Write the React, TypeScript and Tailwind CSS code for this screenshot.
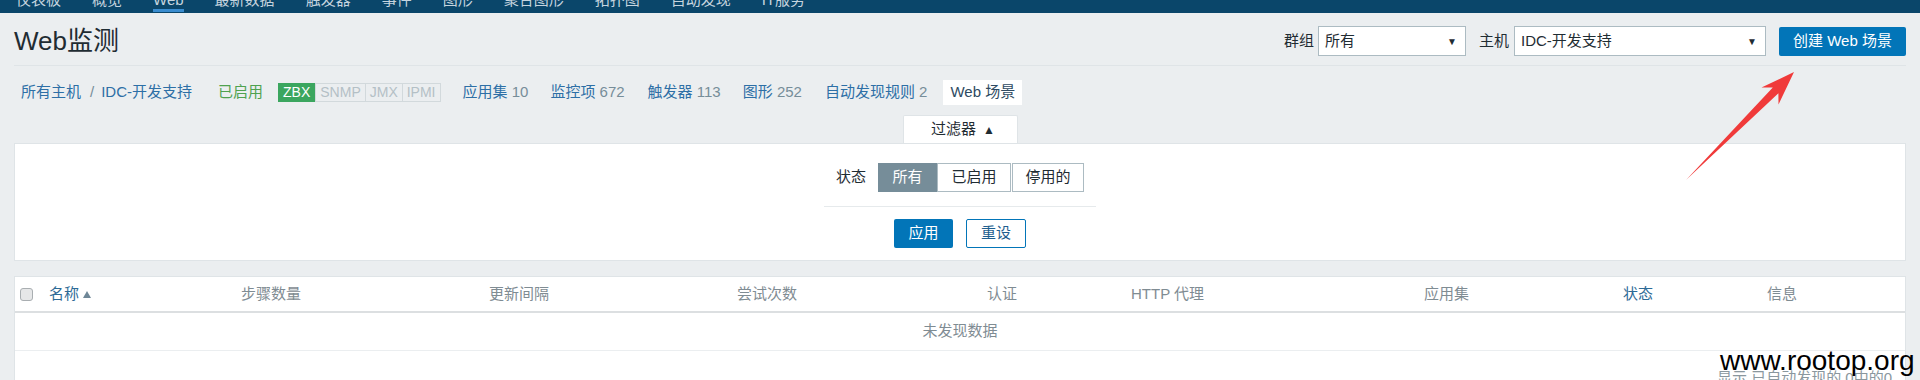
const navItems = ['仪表板', '概览', 'Web', '最新数据', '触发器', '事件', '图形', '聚合图形', '拓扑图', '自动发现', 'IT服务']

const links = [
  { label: '应用集', count: '10', ml: 'ml-[22px]' },
  { label: '监控项', count: '672', ml: 'ml-[22px]' },
  { label: '触发器', count: '113', ml: 'ml-[23px]' },
  { label: '图形', count: '252', ml: 'ml-[22px]' },
  { label: '自动发现规则', count: '2', ml: 'ml-[23px]' },
]

const columns = [
  { label: '名称', sort: true, link: true },
  { label: '步骤数量' },
  { label: '更新间隔' },
  { label: '尝试次数' },
  { label: '认证' },
  { label: 'HTTP 代理' },
  { label: '应用集' },
  { label: '状态', link: true },
  { label: '信息' },
]

function Select({ value, width }: { value: string; width: string }) {
  return (
    <div className={`flex h-[30px] items-center justify-between border border-[#acbbc2] bg-white pl-[6px] pr-[8px] ${width}`}>
      <span>{value}</span>
      <span className="text-[10px] text-[#1f2c33]">▼</span>
    </div>
  )
}

export default function App() {
  return (
    <div className="relative h-[380px] w-[1920px] overflow-hidden bg-[#ebeef0] font-['Liberation_Sans','Noto_Sans_CJK_SC',sans-serif] text-[15px] text-[#1f2c33]">
      {/* top menu, scrolled so only the bottom edge shows */}
      <div className="h-[13px] overflow-hidden bg-[#0a466a]">
        <ul className="flex gap-[31px] pl-[16px]">
          {navItems.map((n) => (
            <li key={n} className="relative -mt-[8px] h-[21px] leading-[15px] text-[#c5d4df]">
              {n}
              {n === 'Web' && <span className="absolute bottom-[1px] left-0 right-0 h-[3px] bg-[#3a8ccf]" />}
            </li>
          ))}
        </ul>
      </div>

      <div className="px-[14px]">
        {/* header */}
        <div className="flex h-[53px] items-center justify-between border-b border-[#dfe4e7] pt-[4px]">
          <h1 className="text-[26px] leading-none">Web监测</h1>
          <div className="flex items-center">
            <span>群组</span>
            <div className="ml-[4px]">
              <Select value="所有" width="w-[148px]" />
            </div>
            <span className="ml-[13px]">主机</span>
            <div className="ml-[5px]">
              <Select value="IDC-开发支持" width="w-[252px]" />
            </div>
            <button className="ml-[13px] h-[29px] w-[127px] rounded-[2px] bg-[#0275b8] text-white">创建 Web 场景</button>
          </div>
        </div>

        {/* breadcrumbs */}
        <div className="flex h-[49px] items-center pt-[4px]">
          <a className="ml-[7px] text-[#2d6fa6]">所有主机</a>
          <span className="ml-[9px] mr-[7px] text-[#768d99]">/</span>
          <a className="text-[#2d6fa6]">IDC-开发支持</a>
          <span className="ml-[26px] text-[#4fa24f]">已启用</span>
          <div className="ml-[15px] flex h-[19px] text-[14px] leading-[17px]">
            <span className="border border-[#3ba65f] bg-[#3ba65f] px-[4px] text-white">ZBX</span>
            <span className="border border-[#d2d9dc] px-[4px] text-[#b4c0c6]">SNMP</span>
            <span className="-ml-px border border-[#d2d9dc] px-[4px] text-[#b4c0c6]">JMX</span>
            <span className="-ml-px border border-[#d2d9dc] px-[4px] text-[#b4c0c6]">IPMI</span>
          </div>
          {links.map((l) => (
            <span key={l.label} className={l.ml}>
              <a className="text-[#2d6fa6]">{l.label}</a> <span className="text-[#768d99]">{l.count}</span>
            </span>
          ))}
          <span className="ml-[16px] flex h-[25px] items-center bg-white px-[7px] text-[#2e4a62]">Web 场景</span>
        </div>

        {/* filter */}
        <div className="flex justify-center">
          <div className="flex h-[28px] w-[115px] items-center justify-center gap-[7px] rounded-t-[2px] border border-b-0 border-[#dfe4e7] bg-white pl-[6px]">
            过滤器 <span className="text-[12px]">▲</span>
          </div>
        </div>
        <div className="flex h-[118px] flex-col items-center border border-[#dfe4e7] bg-white pt-[19px]">
          <div className="flex items-center">
            <span className="mr-[12px]">状态</span>
            <span className="flex h-[29px] w-[59px] items-center justify-center bg-[#768d99] text-white">所有</span>
            <span className="flex h-[29px] w-[74px] items-center justify-center border border-[#acbbc2]">已启用</span>
            <span className="ml-[1px] flex h-[29px] w-[72px] items-center justify-center border border-[#acbbc2]">停用的</span>
          </div>
          <div className="mt-[14px] w-[272px] border-t border-[#e6eaec]" />
          <div className="mt-[12px] flex gap-[13px]">
            <button className="h-[29px] w-[59px] rounded-[2px] bg-[#0275b8] text-white">应用</button>
            <button className="h-[29px] w-[60px] rounded-[2px] border border-[#0275b8] bg-white text-[#1f5f8f]">重设</button>
          </div>
        </div>

        {/* table */}
        <div className="mt-[15px] h-[200px] border border-[#dfe4e7] bg-white">
          <div className="grid h-[36px] grid-cols-[28px_192px_248px_248px_250px_144px_293px_199px_144px_1fr] items-center border-b-2 border-[#dcdfe1]">
            <div className="pl-[5px]">
              <div className="h-[13px] w-[13px] rounded-[3px] border border-[#a9aeb1] bg-[#e6e7e8]" />
            </div>
            {columns.map((c) => (
              <div key={c.label} className={`flex items-center gap-[4px] pl-[6px] ${c.link ? 'text-[#2d6a96]' : 'text-[#7f8c93]'}`}>
                {c.label}
                {c.sort && <span className="h-0 w-0 border-x-[4px] border-b-[7px] border-x-transparent border-b-[#6f8797]" />}
              </div>
            ))}
          </div>
          <div className="flex h-[38px] items-center justify-center border-b border-[#ebeef0] text-[#7f8c93]">未发现数据</div>
          <div className="pr-[13px] pt-[16px] text-right text-[#8a979e]">显示 已自动发现的 0中的0</div>
        </div>
      </div>

      {/* annotation arrow */}
      <svg className="absolute left-[1670px] top-[60px]" width="140" height="140" viewBox="0 0 140 140">
        <path d="M124 12 L108.5 44.5 L108.4 33.2 L16 120 L102.8 27.6 L91.5 27.5 Z" fill="#f03a3a" />
      </svg>

      {/* watermark */}
      <div className="absolute left-[1720px] top-[347px] font-['Liberation_Sans',sans-serif] text-[28px] leading-[28px] text-black">www.rootop.org</div>
    </div>
  )
}
